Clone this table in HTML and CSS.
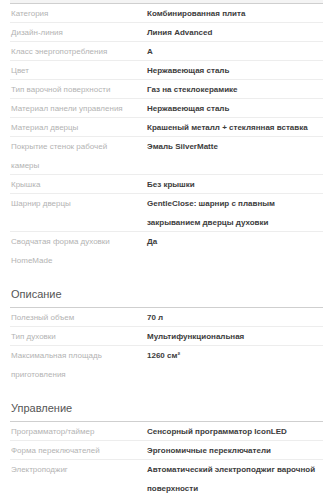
FILE: index.html
```html
<!DOCTYPE html>
<html lang="ru">
<head>
<meta charset="utf-8">
<title>Характеристики</title>
<link rel="stylesheet" href="styles.css">
</head>
<body>
<div class="specs">
  <div class="cap"></div>
  <div class="group">
    <div class="row"><div class="name">Категория</div><div class="val">Комбинированная плита</div></div>
    <div class="row"><div class="name">Дизайн-линия</div><div class="val">Линия Advanced</div></div>
    <div class="row"><div class="name">Класс энергопотребления</div><div class="val">A</div></div>
    <div class="row"><div class="name">Цвет</div><div class="val">Нержавеющая сталь</div></div>
    <div class="row"><div class="name">Тип варочной поверхности</div><div class="val">Газ на стеклокерамике</div></div>
    <div class="row"><div class="name">Материал панели управления</div><div class="val">Нержавеющая сталь</div></div>
    <div class="row"><div class="name">Материал дверцы</div><div class="val">Крашеный металл + стеклянная вставка</div></div>
    <div class="row"><div class="name">Покрытие стенок рабочей камеры</div><div class="val">Эмаль SilverMatte</div></div>
    <div class="row"><div class="name">Крышка</div><div class="val">Без крышки</div></div>
    <div class="row"><div class="name">Шарнир дверцы</div><div class="val">GentleClose: шарнир с плавным закрыванием дверцы духовки</div></div>
    <div class="row"><div class="name">Сводчатая форма духовки HomeMade</div><div class="val">Да</div></div>
  </div>

  <h2 class="title">Описание</h2>
  <div class="group">
    <div class="row"><div class="name">Полезный объем</div><div class="val">70 л</div></div>
    <div class="row"><div class="name">Тип духовки</div><div class="val">Мультифункциональная</div></div>
    <div class="row"><div class="name">Максимальная площадь приготовления</div><div class="val">1260 см²</div></div>
  </div>

  <h2 class="title">Управление</h2>
  <div class="group">
    <div class="row"><div class="name">Программатор/таймер</div><div class="val">Сенсорный программатор IconLED</div></div>
    <div class="row"><div class="name">Форма переключателей</div><div class="val">Эргономичные переключатели</div></div>
    <div class="row"><div class="name">Электроподжиг</div><div class="val">Автоматический электроподжиг варочной поверхности</div></div>
  </div>
</div>
</body>
</html>
```

FILE: styles.css
```css
html, body {
  margin: 0;
  padding: 0;
  background: #fff;
}

body {
  font-family: "Liberation Sans", Arial, sans-serif;
  overflow: hidden;
}

.specs {
  padding-left: 10px;
}

/* rule closing the section above */
.cap {
  height: 3px;
  background: #f4f4f4;
  border-bottom: 1px solid #cfcfcf;
}

.group {
  display: flex;
  flex-direction: column;
}

.row {
  display: grid;
  grid-template-columns: 137px 1fr;
  line-height: 19px;
  font-size: 8px;
  box-shadow: inset 0 -1px 0 #ededed;
}

.row:last-child {
  box-shadow: none;
}

.name {
  padding: 0 14px 0 1px;
  color: #b3b3b3;
}

.val {
  padding-right: 6px;
  color: #3c3c3c;
  font-weight: bold;
}

.title {
  margin: 17px 0 0;
  padding: 0 0 6px 1px;
  font-size: 11px;
  line-height: 14px;
  font-weight: normal;
  color: #555;
  border-bottom: 1px solid #cfcfcf;
}
```
